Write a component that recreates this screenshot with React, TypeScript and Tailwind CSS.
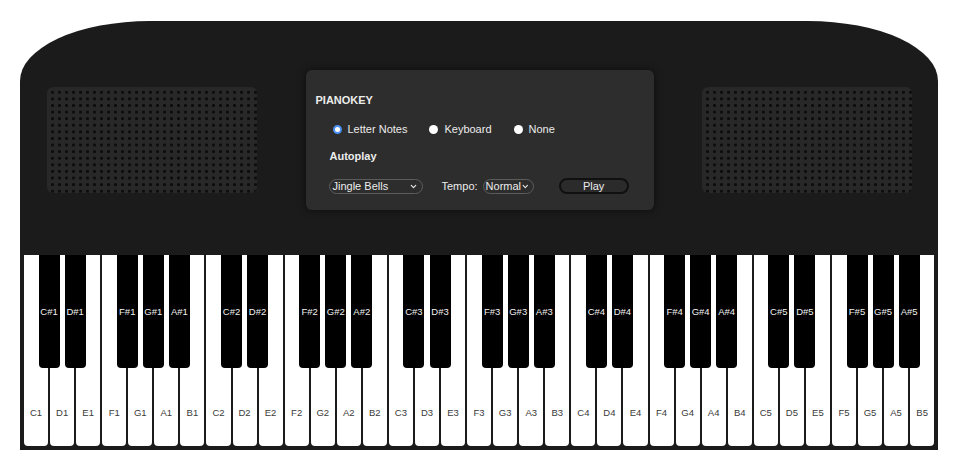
import { ChevronDown } from "lucide-react"

const notes = ["C", "D", "E", "F", "G", "A", "B"]
const octaves = [1, 2, 3, 4, 5]
const hasSharp = (n: string) => n !== "E" && n !== "B"

const Speaker = () => (
  <div className="w-[210px] h-[106px] rounded-[6px] bg-[#282828] bg-[radial-gradient(circle,#0c0c0c_1.2px,transparent_1.8px)] bg-[length:7px_6.6px] bg-[position:2px_2px]" />
)

const Radio = ({ label, checked }: { label: string; checked?: boolean }) => (
  <label className="flex items-center gap-[6px]">
    {checked ? (
      <span className="w-[9px] h-[9px] rounded-full border-[2.5px] border-[#4a8ff0] bg-white" />
    ) : (
      <span className="w-[9px] h-[9px] rounded-full bg-white" />
    )}
    <span>{label}</span>
  </label>
)

const Panel = () => (
  <div className="w-[348px] h-[140px] rounded-[6px] bg-[#2d2d2d] shadow-[0_0_8px_rgba(0,0,0,0.55)] pl-[10px] text-[11px] leading-[13px] text-[#ececec]">
    <div className="mt-[24px] font-bold">PIANOKEY</div>
    <div className="mt-[16px] pl-[17px] flex items-center gap-[22px]">
      <Radio label="Letter Notes" checked />
      <Radio label="Keyboard" />
      <Radio label="None" />
    </div>
    <div className="mt-[14px] pl-[14px] font-bold">Autoplay</div>
    <div className="mt-[15px] pl-[13px] flex items-center h-[16px]">
      <div className="w-[94px] h-[15px] rounded-full border border-[#5c5c5c] flex items-center justify-between pl-[3px] pr-[4px]">
        <span>Jingle Bells</span>
        <ChevronDown size={9} strokeWidth={3} />
      </div>
      <span className="ml-[19px]">Tempo:</span>
      <div className="ml-[5px] w-[51px] h-[15px] rounded-full border border-[#5c5c5c] flex items-center justify-between pl-[2px] pr-[3px]">
        <span>Normal</span>
        <ChevronDown size={9} strokeWidth={3} />
      </div>
      <button className="ml-[25px] w-[70px] h-[16px] rounded-full border-2 border-[#101010] bg-[#2b2b2b] text-[11px] leading-[12px] text-[#ececec]">
        Play
      </button>
    </div>
  </div>
)

const App = () => {
  return (
    <div className="min-h-[471px] bg-white pt-[21px] pl-[20px] font-['Liberation_Sans',Arial,sans-serif]">
      <div className="w-[918px] h-[429px] bg-[#1b1b1b] rounded-tl-[130px_60px] rounded-tr-[130px_60px] flex flex-col">
        <div className="h-[234px] pt-[4px] pl-[27px] pr-[26px] flex items-center justify-between">
          <Speaker />
          <Panel />
          <Speaker />
        </div>
        <div className="h-[191px] px-[4px] flex gap-[2px]">
          {octaves.map((o) =>
            notes.map((n) => (
              <div
                key={`${n}${o}`}
                className="relative flex-1 bg-white rounded-b-[4px] flex flex-col justify-end items-center pb-[27px]"
              >
                <span className="text-[9.5px] leading-[12px] text-[#3a3a3a]">{`${n}${o}`}</span>
                {hasSharp(n) && (
                  <div className="absolute top-0 right-[-11.5px] z-10 w-[21px] h-[113px] bg-black rounded-b-[4px] flex items-center justify-center">
                    <span className="text-[9.5px] leading-[12px] text-[#f0f0f0]">{`${n}#${o}`}</span>
                  </div>
                )}
              </div>
            ))
          )}
        </div>
      </div>
    </div>
  )
}

export default App
